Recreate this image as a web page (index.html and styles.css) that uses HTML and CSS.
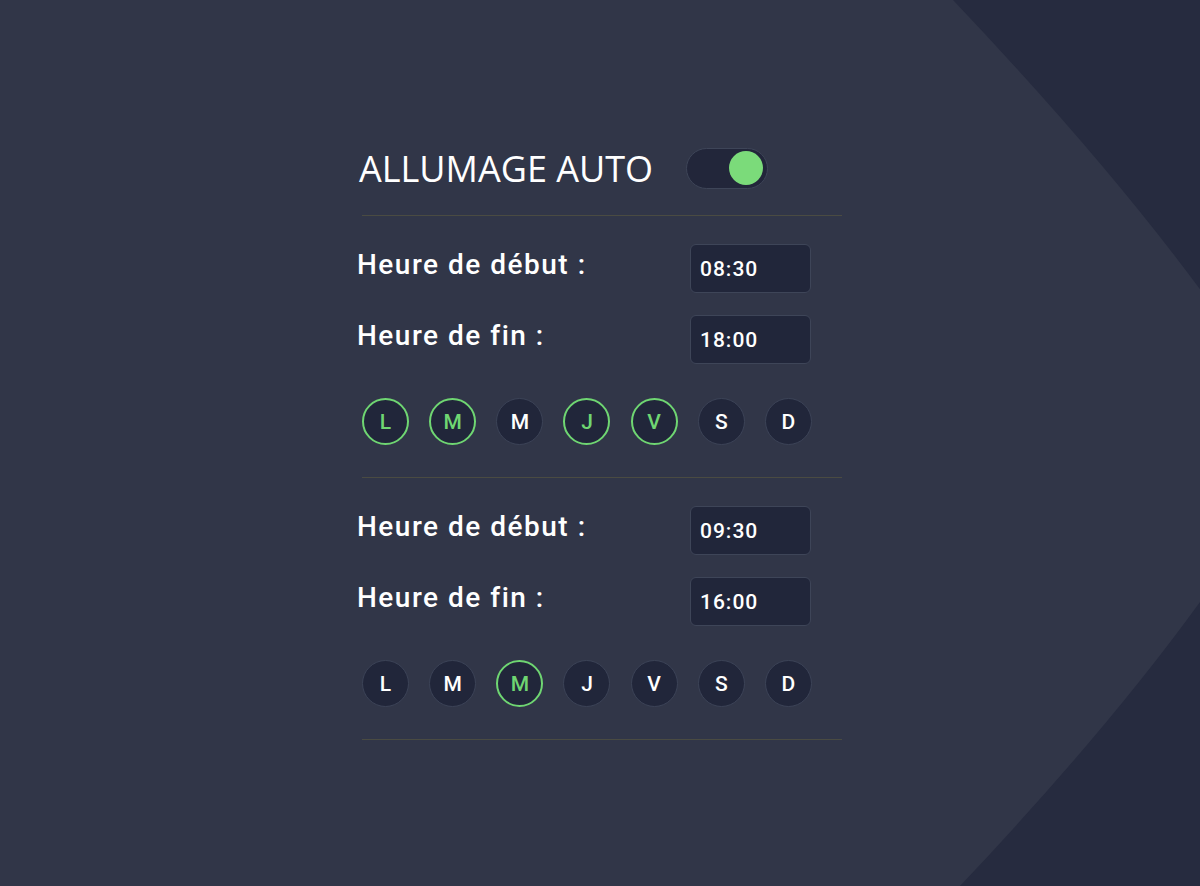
FILE: index.html
```html
<!DOCTYPE html>
<html lang="fr">
<head>
<meta charset="utf-8">
<title>Allumage auto</title>
<link rel="stylesheet" href="styles.css">
</head>
<body>
<div class="backdrop">
  <svg width="1200" height="886" viewBox="0 0 1200 886" xmlns="http://www.w3.org/2000/svg">
    <path d="M953 0 Q1198 258 1300 443 Q1204 628 960 886 L1400 886 L1400 0 Z" fill="#262b3f"/>
  </svg>
</div>
<main class="panel">
  <header class="head">
    <h1 class="title">ALLUMAGE AUTO</h1>
    <div class="toggle"><span class="knob"></span></div>
  </header>

  <section class="slot">
    <div class="row"><span class="label">Heure de début :</span><div class="time">08:30</div></div>
    <div class="row"><span class="label">Heure de fin :</span><div class="time">18:00</div></div>
    <div class="days">
      <span class="day on">L</span>
      <span class="day on">M</span>
      <span class="day">M</span>
      <span class="day on">J</span>
      <span class="day on">V</span>
      <span class="day">S</span>
      <span class="day">D</span>
    </div>
  </section>

  <section class="slot">
    <div class="row"><span class="label">Heure de début :</span><div class="time">09:30</div></div>
    <div class="row"><span class="label">Heure de fin :</span><div class="time">16:00</div></div>
    <div class="days">
      <span class="day">L</span>
      <span class="day">M</span>
      <span class="day on">M</span>
      <span class="day">J</span>
      <span class="day">V</span>
      <span class="day">S</span>
      <span class="day">D</span>
    </div>
  </section>
</main>
</body>
</html>
```

FILE: styles.css
```css
* { box-sizing: border-box; }

html, body {
  margin: 0;
  padding: 0;
}

body {
  width: 1200px;
  height: 886px;
  overflow: hidden;
  background: #313648;
  color: #ffffff;
  font-family: Roboto, "Liberation Sans", sans-serif;
  position: relative;
}

.backdrop {
  position: absolute;
  inset: 0;
  z-index: 0;
}

.backdrop svg { display: block; }

.panel {
  position: relative;
  z-index: 1;
  width: 480px;
  margin-left: 362px;
  padding-top: 148px;
}

.head {
  display: flex;
  align-items: center;
  gap: 33px;
  height: 68px;
  padding-bottom: 27px;
  border-bottom: 1px solid #4a4b42;
}

.title {
  margin: 0 0 0 -3px;
  font-family: "Open Sans", "Liberation Sans", sans-serif;
  font-weight: 400;
  font-size: 36px;
  line-height: 41px;
  letter-spacing: 0;
}

.toggle {
  width: 82px;
  height: 41px;
  border-radius: 21px;
  background: #22263a;
  border: 1.5px solid #3e4558;
  display: flex;
  align-items: center;
  justify-content: flex-end;
  padding-right: 4px;
}

.knob {
  width: 34px;
  height: 34px;
  border-radius: 50%;
  background: #7bdb7a;
}

.slot {
  padding-top: 28px;
  padding-bottom: 32px;
  border-bottom: 1px solid #4a4b42;
}

.row {
  width: 449px;
  display: flex;
  align-items: center;
  justify-content: space-between;
  height: 49px;
}

.row + .row { margin-top: 22px; }

.label {
  margin-left: -5px;
  padding-bottom: 8px;
  font-size: 28px;
  font-weight: 500;
  line-height: 32px;
  letter-spacing: 1.5px;
}

.time {
  width: 121px;
  height: 49px;
  border-radius: 6px;
  background: #21263a;
  border: 1.5px solid #3e4558;
  display: flex;
  align-items: center;
  padding-left: 9px;
  font-size: 21px;
  font-weight: 500;
  letter-spacing: 1px;
}

.days {
  width: 450px;
  margin-top: 34px;
  display: flex;
  justify-content: space-between;
}

.day {
  width: 47px;
  height: 47px;
  border-radius: 50%;
  background: #21263a;
  border: 1.5px solid #3c4357;
  display: flex;
  align-items: center;
  justify-content: center;
  font-size: 21px;
  font-weight: 500;
  color: #ffffff;
}

.day.on {
  border: 2px solid #6fd672;
  color: #6fd672;
}
```
